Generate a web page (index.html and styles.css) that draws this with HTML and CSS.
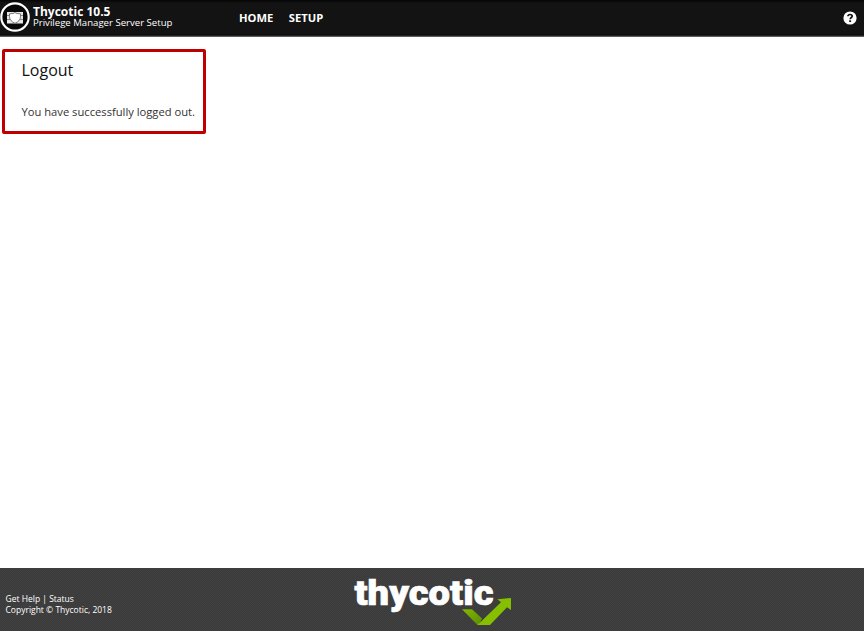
FILE: index.html
```html
<!DOCTYPE html>
<html lang="en">
<head>
<meta charset="utf-8">
<title>Logout</title>
<link rel="stylesheet" href="styles.css">
</head>
<body>
<header class="topbar">
  <svg class="badge" width="31" height="33" viewBox="0 0 31 33">
    <circle cx="15" cy="17" r="13.7" fill="#080808" stroke="#fff" stroke-width="2.2"/>
    <path d="M7 12h16v11.500H7z" fill="#e8e8e8"/>
    <path d="M7 15.500h16M7 19.500h16" stroke="#888" stroke-width="1"/>
    <path d="M15 12.500l2 1 3.500.3v3c0 3-2.200 5-5.500 6.500-3.300-1.500-5.500-3.500-5.500-6.500v-3l3.500-.3z" fill="#fff" stroke="#777" stroke-width="1"/>
  </svg>
  <div class="product">
    <div class="name">Thycotic 10.5</div>
    <div class="edition">Privilege Manager Server Setup</div>
  </div>
  <nav class="menu"><a>HOME</a><a>SETUP</a></nav>
  <svg class="help" width="14" height="14" viewBox="0 0 14 14">
    <circle cx="7" cy="7" r="6.6" fill="#fff"/>
    <path d="M4.900 5.300C5 3.900 5.900 3.500 7 3.500c1.300 0 2.200.7 2.200 1.700C9.200 6.500 7.200 6.600 7.200 8.300" fill="none" stroke="#111" stroke-width="1.700"/>
    <path d="M6.200 9.300h1.900v1.700H6.200z" fill="#111"/>
  </svg>
</header>
<main class="content">
  <section class="message">
    <h1>Logout</h1>
    <p>You have successfully logged out.</p>
  </section>
</main>
<footer class="footer">
  <div class="legal">
    <div><a>Get Help</a> | <a>Status</a></div>
    <div>Copyright © Thycotic, 2018</div>
  </div>
  <svg class="wordmark" width="160" height="60" viewBox="0 0 160 60">
    <defs><linearGradient id="fold" x1="0" y1="0" x2="1" y2="1"><stop offset="0" stop-color="#84b800"/><stop offset="1" stop-color="#5c8c07"/></linearGradient></defs>
    <text x="1.500" y="36.500" textLength="139" lengthAdjust="spacingAndGlyphs">thycotic</text>
    <path d="M109 41.300h10l10 9.200-3 6.500h-1.500z" fill="url(#fold)"/>
    <path d="M124.500 57L148 34.300l-3.500-3L158 30v12l-4-2.700L137 57z" fill="#85bf00"/>
  </svg>
</footer>
</body>
</html>
```

FILE: styles.css
```css
* { box-sizing: border-box; }

body {
  margin: 0;
  height: 631px;
  display: flex;
  flex-direction: column;
  background: #fff;
  font-family: "Open Sans", sans-serif;
  overflow: hidden;
}

.topbar {
  height: 37px;
  display: flex;
  flex: none;
  background: linear-gradient(#050505, #131313 3px, #131313 34px, #080808 35px, #777 37px);
  color: #fff;
}

.badge { flex: none; }

.product {
  width: 206px;
  padding: 6px 0 0 2px;
  flex: none;
  white-space: nowrap;
}

.name { font-size: 12px; font-weight: 700; line-height: 11px; }
.edition { font-size: 9.6px; line-height: 11px; }

.menu {
  display: flex;
  gap: 15.5px;
  margin-left: 2px;
  font-size: 11.2px;
  font-weight: 700;
  line-height: 36px;
}

.help { margin: 11px 7px 0 auto; }

.content {
  flex: 1;
  padding: 12px 2px;
}

.message {
  width: 204px;
  height: 85px;
  border: 3px solid #c00000;
  border-radius: 2px;
  padding: 7px 0 0 16.5px;
  white-space: nowrap;
}

h1 {
  margin: 0;
  font-size: 16px;
  font-weight: 400;
  line-height: 22px;
  color: #111;
}

p {
  margin: 22px 0 0;
  font-size: 11.2px;
  line-height: 18px;
  color: #333;
}

.footer {
  height: 63px;
  flex: none;
  display: flex;
  background: repeating-conic-gradient(#3b3b3b 0 25%, #404040 0 50%) 0 0 / 2px 2px;
  color: #fff;
}

.legal {
  width: 353px;
  padding: 25px 0 0 5.5px;
  font-size: 8.5px;
  line-height: 11px;
}

.wordmark {
  font: 900 35px Roboto, sans-serif;
  fill: #fff;
}

.wordmark text {
  stroke: #fff;
  stroke-width: 0.7px;
}
```
